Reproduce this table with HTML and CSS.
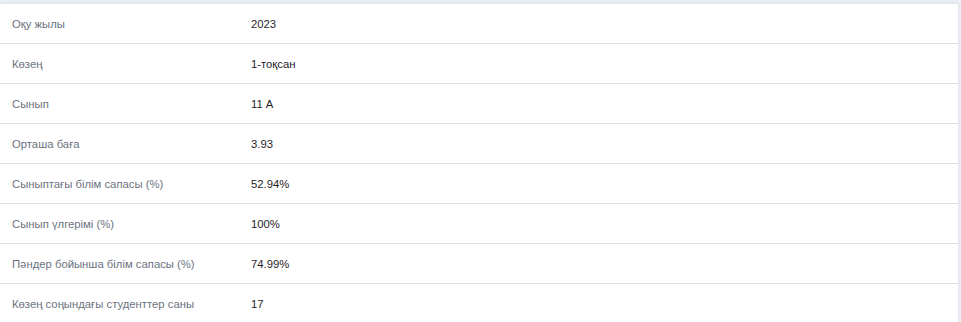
FILE: index.html
```html
<!DOCTYPE html>
<html lang="kk">
<head>
    <meta charset="UTF-8">
    <meta name="viewport" content="width=device-width, initial-scale=1.0">
    <title>Сынып көрсеткіштері</title>
    <link rel="stylesheet" href="styles.css">
</head>
<body>
    <div class="card">
        <table class="info-table">
            <tbody>
                <tr>
                    <td class="label">Оқу жылы</td>
                    <td class="value">2023</td>
                </tr>
                <tr>
                    <td class="label">Көзең</td>
                    <td class="value">1-тоқсан</td>
                </tr>
                <tr>
                    <td class="label">Сынып</td>
                    <td class="value">11 А</td>
                </tr>
                <tr>
                    <td class="label">Орташа баға</td>
                    <td class="value">3.93</td>
                </tr>
                <tr>
                    <td class="label">Сыныптағы білім сапасы (%)</td>
                    <td class="value">52.94%</td>
                </tr>
                <tr>
                    <td class="label">Сынып үлгерімі (%)</td>
                    <td class="value">100%</td>
                </tr>
                <tr>
                    <td class="label">Пәндер бойынша білім сапасы (%)</td>
                    <td class="value">74.99%</td>
                </tr>
                <tr>
                    <td class="label">Көзең соңындағы студенттер саны</td>
                    <td class="value">17</td>
                </tr>
            </tbody>
        </table>
    </div>
</body>
</html>
```

FILE: styles.css
```css
body {
    font-family: "Liberation Sans", Arial, sans-serif;
    font-size: 11.3px;
    margin: 0;
    padding-top: 3px;
    background-color: #eef2f7;
}

.card {
    background: white;
    width: 958px;
    border-top: 1px solid #e4e8ee;
    border-right: 1px solid #e4e8ee;
    box-shadow: 0 -1px 3px rgba(120, 140, 170, 0.15);
}

.info-table {
    width: 100%;
    border-collapse: collapse;
}

.info-table td {
    height: 39px;
    padding: 0 12px;
    border-bottom: 1px solid #dcdfe4;
    vertical-align: middle;
}

.info-table tr:last-child td {
    border-bottom: none;
}

.label {
    width: 215px;
    color: #6b7280;
}

.value {
    color: #1f2328;
}
```
